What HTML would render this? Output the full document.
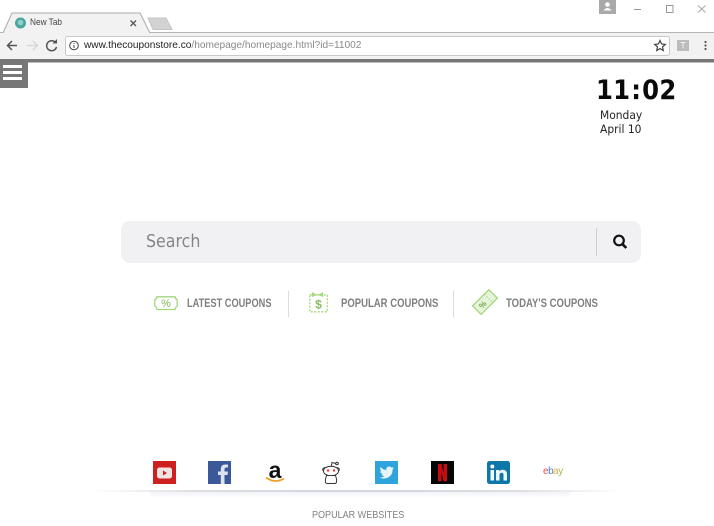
<!DOCTYPE html>
<html><head><meta charset="utf-8">
<style>
html,body{margin:0;padding:0;background:#fff;width:714px;height:526px;overflow:hidden}
body{position:relative;font-family:"Liberation Sans",sans-serif}
.a{position:absolute;white-space:nowrap;transform-origin:0 50%}
svg{position:absolute;overflow:visible}
.lab{font-family:"Liberation Sans",sans-serif;font-weight:700;font-size:11.500px;color:#808080;top:297px;line-height:14px}
</style></head><body>
<!-- browser chrome -->
<svg style="left:0;top:0" width="714" height="60">
<rect x="0" y="33" width="714" height="26" fill="#f2f2f2"/>
<path d="M0 32.5H714" stroke="#b5b5b5"/>
<path d="M3 33 L12 13 H140 L150 33" fill="#f2f2f2" stroke="#aaa"/>
<path d="M4 33H149" stroke="#f2f2f2" stroke-width="1.5"/>
<path d="M148 18 H166 L172 29.500 H153 Z" fill="#d2d2d2" stroke="#c4c4c4"/>
<circle cx="20.500" cy="23" r="5.500" fill="#4aa79e"/><circle cx="20.500" cy="22.500" r="2.800" fill="#8fd0ca"/>
<path d="M130.500 20.500 L136 26 M136 20.500 L130.500 26" stroke="#555" stroke-width="1.300"/>
<path d="M17 45.500 H8 M12 41 L7.500 45.500 L12 50" fill="none" stroke="#555" stroke-width="1.500"/>
<path d="M37 45.500 H27 M33 41 L37.500 45.500 L33 50" fill="none" stroke="#d8d8d8" stroke-width="1.500"/>
<path d="M55.500 42.500 A5 5 0 1 0 56.500 47" fill="none" stroke="#555" stroke-width="1.500"/>
<path d="M52.500 43.500 H57 V39 Z" fill="#555"/>
<rect x="65.500" y="36.500" width="604" height="19" rx="2" fill="#fff" stroke="#c9c9c9"/>
<circle cx="74" cy="45.500" r="4.300" fill="none" stroke="#444"/>
<path d="M74 45 V48 M74 43 V44" stroke="#444"/>
<path d="M660 40.500 L661.600 44 L665.300 44.400 L662.500 46.900 L663.300 50.500 L660 48.600 L656.700 50.500 L657.500 46.900 L654.700 44.400 L658.400 44 Z" fill="none" stroke="#444" stroke-width="1.200"/>
<rect x="677" y="40" width="12" height="11" fill="#bcbcbc"/>
<path d="M680.500 42.500 H685.500 M683 42.500 V48.500" stroke="#eee"/>
<circle cx="705.500" cy="42" r="1.100" fill="#555"/><circle cx="705.500" cy="45.500" r="1.100" fill="#555"/><circle cx="705.500" cy="49" r="1.100" fill="#555"/>
<rect x="599" y="0" width="17" height="14" fill="#a9a9a9"/>
<circle cx="607.500" cy="4.500" r="2.300" fill="#fff"/><path d="M603.500 10.500 Q607.500 5.500 611.500 10.500 Z" fill="#fff"/>
<path d="M634 9.500 H641" stroke="#999"/>
<rect x="666.500" y="5.500" width="6.500" height="7" fill="none" stroke="#999"/>
<path d="M698 5.500 L705.500 12.500 M705.500 5.500 L698 12.500" stroke="#aaa"/>
<rect x="0" y="59" width="714" height="3.500" fill="#777"/>
</svg>
<div class="a" style="left:30px;top:16px;font-size:9.500px;line-height:13px;color:#444;transform:scaleX(.87)">New Tab</div>
<div class="a" style="left:84px;top:39px;font-size:10.200px;line-height:13px;color:#222;transform:scaleX(.993)">www.thecouponstore.co<span style="color:#8a8a8a">/homepage/homepage.html?id=11002</span></div>
<!-- menu -->
<div class="a" style="left:0;top:62px;width:28px;height:26px;background:#777"></div>
<div class="a" style="left:3px;top:65px;width:19px;height:3px;background:#fff"></div>
<div class="a" style="left:3px;top:71px;width:19px;height:3px;background:#fff"></div>
<div class="a" style="left:3px;top:77px;width:19px;height:3px;background:#fff"></div>
<!-- clock -->
<div class="a" style="left:596px;top:74px;font-family:'DejaVu Sans',sans-serif;font-weight:700;font-size:27px;line-height:34px;color:#0a0a0a;letter-spacing:.3px;transform:scaleX(.9)">11<span style="margin:0 1px">:</span>02</div>
<div class="a" style="left:600px;top:108px;font-family:'DejaVu Sans',sans-serif;font-size:11.500px;line-height:14px;color:#222;transform:scaleX(.93)">Monday<br>April 10</div>
<!-- search -->
<div class="a" style="left:121px;top:221px;width:520px;height:42px;border-radius:9px;background:#f1f1f3"></div>
<div class="a" style="left:146px;top:230px;font-family:'DejaVu Sans',sans-serif;font-size:18px;line-height:23px;color:#858585;transform:scaleX(.88)">Search</div>
<div class="a" style="left:596px;top:228px;width:1px;height:28px;background:#cfcfd2"></div>
<svg style="left:612px;top:234px" width="16" height="16"><circle cx="7" cy="6.500" r="4.800" fill="none" stroke="#111" stroke-width="2.200"/><path d="M10.500 10.200 L14.300 14" stroke="#111" stroke-width="2.600"/></svg>
<!-- coupons -->
<svg style="left:154px;top:296px" width="24" height="15"><path d="M3 .8 H21 Q21.500 3 23.200 3.800 V10.200 Q21.500 11 21 13.500 H3 Q2.500 11 .8 10.200 V3.800 Q2.500 3 3 .8Z" fill="#fff" stroke="#a3d67c" stroke-width="1.300"/><text x="12" y="11.200" font-family="Liberation Sans" font-size="11" fill="#7fb85a" text-anchor="middle">%</text></svg>
<div class="a lab" style="left:187px;transform:scaleX(.803)">LATEST COUPONS</div>
<div class="a" style="left:288px;top:291px;width:1px;height:26px;background:#dcdcdc"></div>
<svg style="left:309px;top:291px" width="20" height="22"><rect x=".8" y="3.800" width="17.500" height="17" fill="none" stroke="#a3d67c" stroke-width="1.300" stroke-dasharray="2 1.500"/><path d="M3 1 L8.500 4 L3 6 Z M14 1 L8.500 4 L14 6 Z" fill="#a9d985"/><text x="9.500" y="17.500" font-family="Liberation Sans" font-size="12" font-weight="700" fill="#86bf5e" text-anchor="middle">$</text></svg>
<div class="a lab" style="left:341px;transform:scaleX(.828)">POPULAR COUPONS</div>
<div class="a" style="left:453px;top:291px;width:1px;height:26px;background:#dcdcdc"></div>
<svg style="left:472px;top:289px" width="26" height="26"><g transform="rotate(-45 13 13)"><rect x="1.500" y="7" width="23" height="12" fill="#e6f4da" stroke="#a3d67c" stroke-width="1.300"/><path d="M18 7 V19" stroke="#a3d67c" stroke-dasharray="1.500 1.500"/><text x="9.500" y="16" font-family="Liberation Sans" font-size="8" font-weight="700" fill="#6fa84a" text-anchor="middle">%</text></g></svg>
<div class="a lab" style="left:506px;transform:scaleX(.83)">TODAY'S COUPONS</div>
<!-- shelf -->
<div class="a" style="left:90px;top:490px;width:535px;height:2px;background:linear-gradient(90deg,#fff,#dedede 20%,#d0d5e0 50%,#dedede 80%,#fff)"></div>
<div class="a" style="left:150px;top:492px;width:420px;height:6px;background:linear-gradient(#f1f3f8,#fff)"></div>
<!-- site icons -->
<svg style="left:153px;top:461px" width="23" height="23"><rect width="23" height="23" fill="#cd201f"/><rect x="4" y="6.500" width="15" height="11" rx="2.500" fill="#f3e4e4"/><path d="M10 9.500 L14 12 L10 14.500 Z" fill="#cd201f"/></svg>
<svg style="left:208px;top:461px" width="23" height="23"><rect width="23" height="23" fill="#3b5998"/><path d="M16.500 23 V14 H19.500 L20 10.500 H16.500 V8.500 Q16.500 6.500 18.500 6.500 H20 V3.500 H17.500 Q12.800 3.500 12.800 8 V10.500 H10 V14 H12.800 V23 Z" fill="#dfe3ee"/></svg>
<svg style="left:264px;top:461px" width="23" height="23"><text x="11" y="17" font-family="Liberation Sans" font-size="23" font-weight="700" fill="#111" text-anchor="middle">a</text><path d="M2 16.500 Q11 23 20 17.500" fill="none" stroke="#f1a02a" stroke-width="1.800"/></svg>
<svg style="left:321px;top:460px" width="20" height="25" fill="#fff" stroke="#333" stroke-width="1"><path d="M10 8 L11 2.500 L15 3.500" fill="none"/><circle cx="16" cy="3.500" r="1.300"/><circle cx="3.500" cy="9.500" r="1.800"/><circle cx="16.500" cy="9.500" r="1.800"/><ellipse cx="10" cy="11" rx="7.500" ry="4.800"/><path d="M5.500 15.500 Q3 23 6 23.500 H14 Q17 23 14.500 15.500 Z"/><circle cx="7" cy="10.500" r="1.200" fill="#e33" stroke="none"/><circle cx="13" cy="10.500" r="1.200" fill="#e33" stroke="none"/></svg>
<svg style="left:375px;top:461px" width="23" height="23"><rect width="23" height="23" fill="#2ea3dc"/><path d="M4.500 16.500 Q10 19 14 16 Q18 13 17.500 8.500 L19 7 L17 7.300 L18.500 5.700 L16.500 6.500 Q14.500 4.800 12.500 6 Q10.800 7.200 11.500 9 Q8 9 5.500 6 Q4.500 8.500 6.500 10.500 L5.200 10.200 Q5.500 12.500 7.800 13 L6.500 13.200 Q7.500 15 9.500 15 Q7 16.800 4.500 16.500Z" fill="#e6f4fb"/></svg>
<svg style="left:431px;top:461px" width="23" height="23"><rect width="23" height="23" fill="#060606"/><path d="M7 3 H10.500 L12.500 12 V3 H16 V20.500 L12.500 20 L10.500 11.500 V20 L7 20.500 Z" fill="#c80c14"/></svg>
<svg style="left:487px;top:461px" width="23" height="23"><rect width="23" height="23" rx="2.500" fill="#0f77a8"/><rect x="3.500" y="9" width="3.500" height="10.500" fill="#f0f7fb"/><circle cx="5.300" cy="5.500" r="2" fill="#f0f7fb"/><path d="M9 9 H12.300 V10.500 Q13.500 8.700 16 8.800 Q20 9 20 13.500 V19.500 H16.500 V14 Q16.500 11.700 14.700 11.700 Q12.500 11.700 12.500 14 V19.500 H9 Z" fill="#f0f7fb"/></svg>
<div class="a" style="left:543px;top:466px;font-size:10px;line-height:12px;letter-spacing:-.5px"><span style="color:#d9534f">e</span><span style="color:#4a7fd0">b</span><span style="color:#e0b040">a</span><span style="color:#9cbf50">y</span></div>
<div class="a" style="left:312px;top:509px;font-size:10.500px;line-height:13px;color:#808080;transform:scaleX(.86)">POPULAR WEBSITES</div>
</body></html>
